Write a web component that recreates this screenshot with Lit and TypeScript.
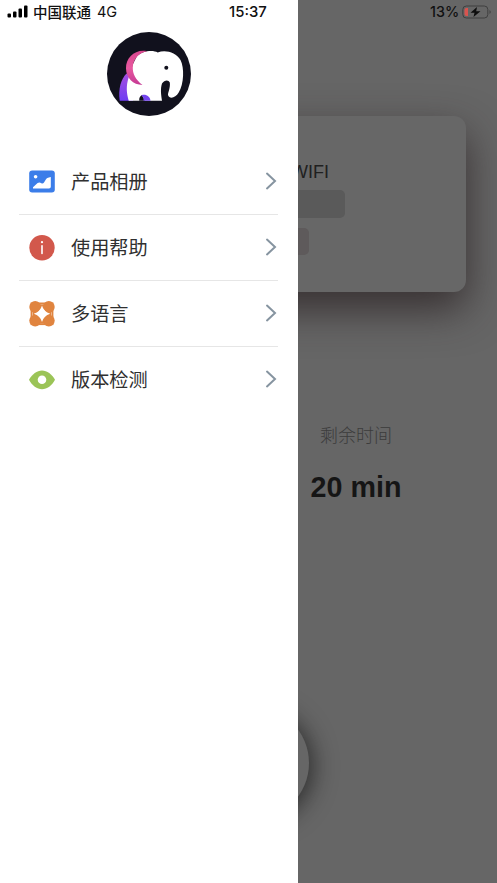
import { LitElement, html, css, svg } from "lit";
import { customElement, property } from "lit/decorators.js";

const icons: Record<string, unknown> = {
  album: svg`<rect x="0.2" y="1.5" width="25.6" height="22" rx="3" fill="#3b7de9"/>
    <circle cx="6.6" cy="7.8" r="1.8" fill="#fff"/>
    <path d="M4 19.6V18.2L8.600 14.100Q10.400 12.800 12.400 14.200Q14 14.800 15 13.400L17 10.200Q17.800 9 19 8.800L21.800 8V17.800Q21.800 19.600 20 19.600Z" fill="#fff"/>`,
  help: svg`<circle cx="13" cy="12.8" r="12.7" fill="#d2584c"/>
    <circle cx="13" cy="7.2" r="1.1" fill="#fff"/>
    <rect x="12.2" y="10" width="1.6" height="9.2" rx="0.8" fill="#fff"/>`,
  language: svg`<g fill="#e0843f"><circle cx="6.2" cy="6" r="5.9"/><circle cx="19.8" cy="6" r="5.9"/>
    <circle cx="6.2" cy="19.6" r="5.9"/><circle cx="19.8" cy="19.6" r="5.9"/>
    <rect x="4" y="3.500" width="18" height="18.500"/></g>
    <rect x="2.600" y="2.500" width="20.800" height="20.600" fill="none" stroke="#e0843f" stroke-width="2"/>
    <path d="M13 4.500Q14.800 11 21.200 12.800Q14.800 14.600 13 21.100Q11.200 14.600 4.800 12.800Q11.200 11 13 4.500Z" fill="#fff"/>
    <circle cx="13" cy="12.800" r="4" fill="#fff"/>`,
  version: svg`<path d="M0 12.800C3 7 8 3.400 13 3.400S23 7 26 12.800C23 18.600 18 22.200 13 22.200S3 18.600 0 12.800Z" fill="#9bc457"/>
    <circle cx="13" cy="12.800" r="4.300" fill="#fff"/>`,
};

@customElement("menu-row")
class MenuRow extends LitElement {
  @property() icon = "";
  @property() label = "";

  static styles = css`
    :host {
      display: flex;
      align-items: center;
      box-sizing: border-box;
      height: 66px;
      padding: 0 1px 0 10px;
      border-bottom: 1px solid #e6e6e6;
    }
    :host(:last-of-type) { border-bottom-color: transparent; }
    .icon { width: 26px; height: 26px; flex: none; }
    .label { flex: 1; margin-left: 16px; padding-top: 2px; font-size: 19.2px; line-height: 28px; color: #303030; }
    .chevron { width: 12px; height: 18px; margin-bottom: 1px; flex: none; }
  `;

  render() {
    return html`
      <svg class="icon" viewBox="0 0 26 26">${icons[this.icon]}</svg>
      <span class="label">${this.label}</span>
      <svg class="chevron" viewBox="0 0 12 18" fill="none" stroke="#8694a0" stroke-width="2"
        stroke-linecap="round"><path d="M2 1.600L10 9L2 16.400"/></svg>
    `;
  }
}

@customElement("app-root")
class AppRoot extends LitElement {
  static styles = css`
    :host {
      display: grid;
      grid-template: 883px / 497px;
      overflow: hidden;
      background: #666;
      font-family: "Liberation Sans", "Noto Sans CJK SC", sans-serif;
    }
    .page, .drawer, .status { grid-area: 1 / 1; min-width: 0; }
    .page { display: flex; flex-direction: column; overflow: hidden; }
    .card {
      box-sizing: border-box;
      flex: none;
      height: 176px;
      margin: 116px 31px 0;
      padding: 45px 121px 0 0;
      border-radius: 12px;
      background: #676767;
      box-shadow: 0 17px 42px rgba(40, 30, 32, 0.76);
      display: flex;
      flex-direction: column;
      align-items: flex-end;
    }
    .ssid { margin-right: 16px; font-size: 18px; line-height: 22px; color: #202020; }
    .bar { margin-top: 7px; width: 190px; height: 28px; border-radius: 5px; background: #5a5a5a; }
    .bar.short { margin: 10px 36px 0 0; width: 120px; height: 27px; background: #5e5a5b; }
    .stat {
      flex: none;
      align-self: flex-end;
      width: 282px;
      margin-top: 131px;
      text-align: center;
    }
    .caption { font-size: 18px; line-height: 26px; font-weight: 300; color: #3c3c3c; }
    .value { margin-top: 20px; font-size: 28.7px; line-height: 36px; font-weight: bold; color: #151515; }
    .dial {
      flex: none;
      width: 114px;
      height: 114px;
      margin: 201px 0 0 195px;
      border-radius: 50%;
      background: #666;
      box-shadow: 3px 3px 24px rgba(20, 20, 20, 0.72);
    }
    .drawer {
      z-index: 1;
      box-sizing: border-box;
      width: 298px;
      padding: 32px 20px 0 19px;
      background: #fff;
    }
    .avatar { display: block; width: 84px; height: 84px; margin: 0 auto 33px 88px; }
    .status {
      z-index: 2;
      display: flex;
      align-items: center;
      height: 24px;
      font-family: Inter, "Noto Sans CJK SC", sans-serif;
      font-size: 14px;
      line-height: 24px;
      color: #111;
      white-space: nowrap;
    }
    .signal { width: 21px; height: 13px; margin: 0 5px 1px 7px; }
    .carrier { width: 58px; margin-right: 6px; padding-top: 1px; font-size: 14.5px; font-weight: 500; }
    .network { width: 132px; font-weight: 400; font-size: 14.5px; }
    .time { width: 201px; font-weight: 500; font-size: 14.9px; }
    .percent { width: 29px; font-weight: 500; font-size: 14.3px; }
    .battery { width: 30px; height: 14px; margin-left: 3px; }
  `;

  render() {
    return html`
      <main class="page">
        <section class="card">
          <div class="ssid">WIFI</div>
          <div class="bar"></div>
          <div class="bar short"></div>
        </section>
        <section class="stat">
          <div class="caption">剩余时间</div>
          <div class="value">20 min</div>
        </section>
        <div class="dial"></div>
      </main>

      <nav class="drawer">
        <svg class="avatar" viewBox="0 0 84 84">
          <defs>
            <linearGradient id="pink" x1="0" y1="0" x2="0" y2="1">
              <stop offset="0" stop-color="#d9488f"/><stop offset="0.5" stop-color="#e8589f"/><stop offset="1" stop-color="#c53a94"/>
            </linearGradient>
            <linearGradient id="violet" x1="0" y1="0" x2="0" y2="1">
              <stop offset="0" stop-color="#a550e0"/><stop offset="1" stop-color="#6f3df2"/>
            </linearGradient>
          </defs>
          <circle cx="42" cy="42" r="42" fill="#11111d"/>
          <path d="M19.500 41.500C14 47 11 57 12.700 68.700H26L24 45Z" fill="url(#violet)"/>
          <path d="M30 24C35 19 46 17.500 50.700 20.500C58 17.500 69 20 73.500 28C77.500 36 77 52 71.700 60.500C68.500 66 62.500 67.500 61 63C61 60 63.500 56 62.800 50.500C61.500 47.500 57.500 47.800 55 51.500C53.300 57 54 62 55 68.700H43L32 68.700H21.700C19.500 61 19 54 21.500 46L26 32Z" fill="#fff"/>
          <path d="M32.200 68.700C32 66 33 64 35 63L38 68.700Z" fill="#11111d"/>
          <path d="M34.500 63.200C39 61.800 43.200 64.500 43.500 68.700H36.500Q36.800 65 34.500 63.200Z" fill="#7444ee"/>
          <path d="M40 19.200C28 17 18.800 25.500 19 36.500C19.200 46 26 52.800 35.500 53C28.500 47.500 25.500 42 25.800 35C26.200 27 32 20.800 40 19.200Z" fill="url(#pink)"/>
          <circle cx="59.300" cy="35.700" r="2" fill="#11111d"/>
        </svg>
        <menu-row icon="album" label="产品相册"></menu-row>
        <menu-row icon="help" label="使用帮助"></menu-row>
        <menu-row icon="language" label="多语言"></menu-row>
        <menu-row icon="version" label="版本检测"></menu-row>
      </nav>

      <header class="status">
        <svg class="signal" viewBox="0 0 21 13" fill="#000">
          <rect x="0.500" y="8.500" width="3.500" height="4" rx="1"/>
          <rect x="6" y="6.500" width="3.500" height="6" rx="1"/>
          <rect x="11.500" y="3.500" width="3.500" height="9" rx="1"/>
          <rect x="17" y="0.500" width="3.500" height="12" rx="1"/>
        </svg>
        <span class="carrier">中国联通</span>
        <span class="network">4G</span>
        <span class="time">15:37</span>
        <span class="percent">13%</span>
        <svg class="battery" viewBox="0 0 30 14">
          <rect x="0.800" y="1" width="25" height="12" rx="3.500" fill="none" stroke="#3f3f3f"/>
          <path d="M6 3H4.500Q2.500 3 2.500 5V9Q2.500 11 4.500 11H6Z" fill="#d9544f"/>
          <path d="M27.500 5Q30 7 27.500 9Z" fill="#3f3f3f"/>
          <path d="M15 2L8.500 7.800H12.500L11.500 12L18.500 6.200H14.200Z" fill="#0d0d0d"/>
        </svg>
      </header>
    `;
  }
}
